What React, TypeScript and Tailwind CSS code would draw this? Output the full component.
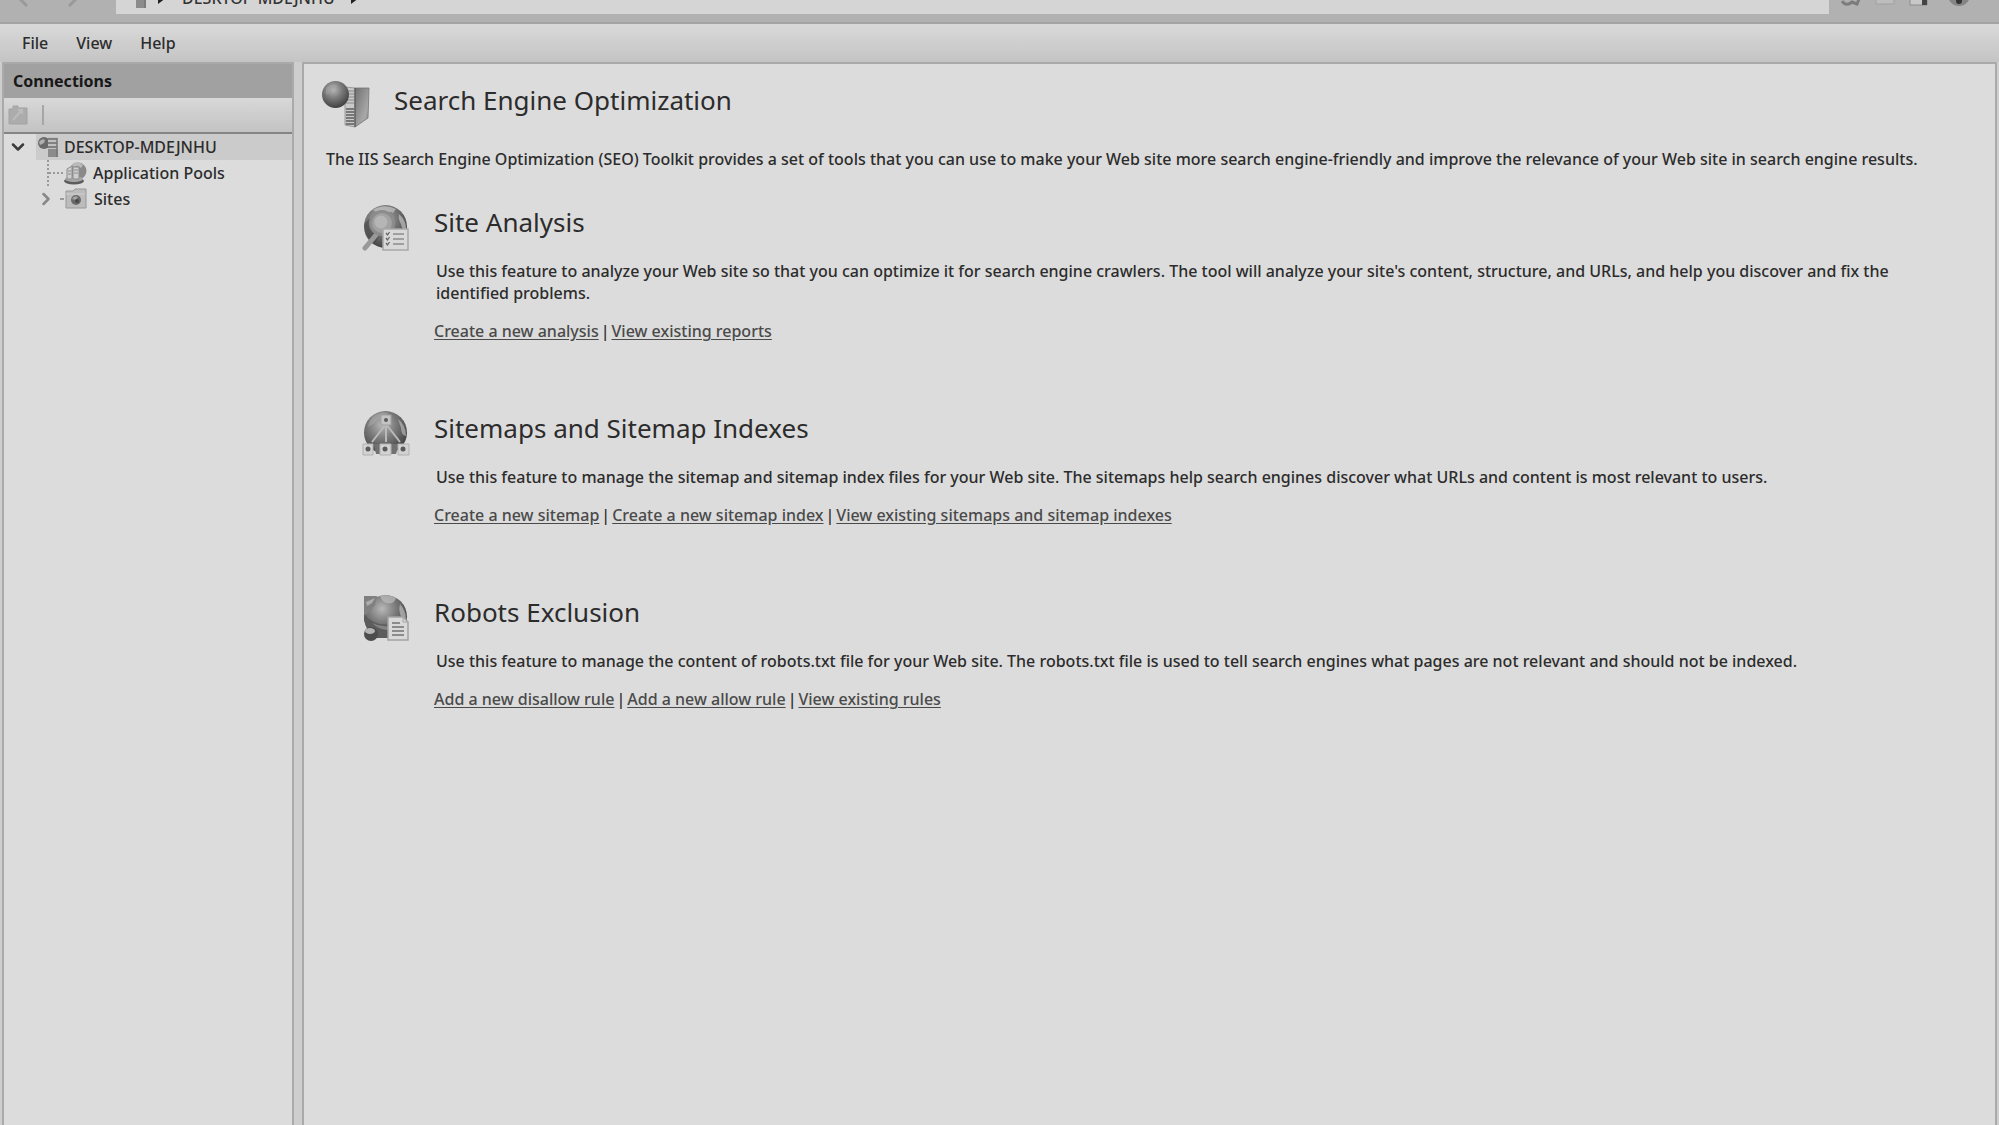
import { ChevronDown, ChevronRight } from "lucide-react";

interface SectionLink {
  label: string;
  href: string;
}

interface Section {
  title: string;
  description: string;
  links: SectionLink[];
  icon: () => React.JSX.Element;
}

function GlobeDefs({ id }: { id: string }) {
  return (
    <defs>
      <radialGradient id={id} cx="0.42" cy="0.32" r="0.7">
        <stop offset="0" stopColor="#b8b8b8" />
        <stop offset="0.45" stopColor="#7c7c7c" />
        <stop offset="1" stopColor="#3e3e3e" />
      </radialGradient>
    </defs>
  );
}

function ServerIcon({ id, className }: { id: string; className: string }) {
  return (
    <svg viewBox="0 0 48 48" className={className} aria-hidden="true">
      <GlobeDefs id={id} />
      <defs>
        <linearGradient id={`${id}-side`} x1="0" y1="0" x2="1" y2="1">
          <stop offset="0" stopColor="#707070" />
          <stop offset="0.7" stopColor="#a8a8a8" />
          <stop offset="1" stopColor="#858585" />
        </linearGradient>
      </defs>
      <path d="M23 7 L33 8 L33 47 L23 45 Z" fill="#c9c9c9" stroke="#8a8a8a" strokeWidth="0.8" />
      <path
        d="M24 11 H32 M24 14 H32 M24 17 H32 M24 20 H32 M24 23 H32"
        stroke="#8a8a8a"
        strokeWidth="1.2"
      />
      <path
        d="M24 29 H32 M24 32 H32 M24 35 H32 M24 38 H32 M24 41 H32 M24 44 H32"
        stroke="#5e5e5e"
        strokeWidth="1.6"
      />
      <path d="M33 8 L47 8 L46 38 L33 47 Z" fill={`url(#${id}-side)`} stroke="#757575" strokeWidth="0.8" />
      <path d="M33 8 V47" stroke="#555" strokeWidth="1" />
      <circle cx="13.5" cy="14.5" r="13.5" fill={`url(#${id})`} />
      <path d="M4 8 Q9 3 15 5 Q14 10 8 11 Q6 16 4 14 Z" fill="#a4a4a4" opacity="0.5" />
    </svg>
  );
}

// 24px variant used in the tree and the address bar
function SmallServerIcon() {
  return (
    <svg viewBox="0 0 24 24" className="size-6 shrink-0" aria-hidden="true">
      <circle cx="8" cy="8" r="6" fill="#6a6a6a" />
      <path d="M3 7 Q6 3 9 5 L8 8 L4 10 Z" fill="#b0b0b0" />
      <path d="M12 2 H22 V22 H12 Z" fill="#c0c0c0" />
      <path d="M12 4 H21 M12 8 H21 M12 12 H21" stroke="#6c6c6c" strokeWidth="1.5" />
      <path d="M12 14 H22 V22 H12 Z" fill="#8c8c8c" />
      <path d="M21 3 V22" stroke="#777" strokeWidth="1.5" />
    </svg>
  );
}

function AnalysisIcon() {
  return (
    <svg viewBox="0 0 48 48" className="size-12" aria-hidden="true">
      <GlobeDefs id="globe-analysis" />
      <circle cx="23.5" cy="22.5" r="21.5" fill="url(#globe-analysis)" />
      <path d="M2 20 Q3 33 13 40 L18 30 Q8 26 8 14 Z" fill="#484848" opacity="0.6" />
      <path d="M11 6 Q22 -1 34 5 L31 9 Q27 6 24 10 Q20 5 16 9 Z" fill="#c4c4c4" opacity="0.7" />
      <path d="M37 10 Q45 17 44 27 Q40 26 39 20 Q36 15 37 10 Z" fill="#c2c2c2" opacity="0.7" />
      <path d="M14 31 L3 44" stroke="#999" strokeWidth="5" strokeLinecap="round" />
      <circle cx="20" cy="19" r="11.5" fill="#a2a2a2" stroke="#8c8c8c" strokeWidth="3" />
      <circle cx="19" cy="18" r="6.5" fill="#bdbdbd" opacity="0.7" />
      <path d="M21 25 H46 V46 H21 Z" fill="#d9d9d9" stroke="#a8a8a8" strokeWidth="1.5" />
      <path d="M31 30 H42 M31 35 H42 M31 40 H42" stroke="#8c8c8c" strokeWidth="1.6" />
      <path d="M24 29 l1.5 2 l2 -3 M24 34 l1.5 2 l2 -3 M24 39 l1.5 2 l2 -3" stroke="#666" strokeWidth="1.3" fill="none" />
    </svg>
  );
}

function SitemapIcon() {
  return (
    <svg viewBox="0 0 48 48" className="size-12" aria-hidden="true">
      <GlobeDefs id="globe-sitemap" />
      <circle cx="23.5" cy="22.5" r="21.5" fill="url(#globe-sitemap)" />
      <path d="M13 5 Q20 1 26 3 Q22 9 16 9 Q12 14 6 17 Q7 9 13 5 Z" fill="#adadad" opacity="0.5" />
      <path d="M36 9 Q44 15 44 26 Q39 25 39 18 Z" fill="#b5b5b5" opacity="0.7" />
      <path d="M12 34 H37 L34 44 H14 Z" fill="#707070" />
      <path d="M24 14 L10 32 M24 14 V32 M24 14 L38 32" stroke="#bababa" strokeWidth="2" fill="none" />
      <path d="M19 5 H29 V15 H19 Z" fill="#c4c4c4" stroke="#a0a0a0" />
      <path d="M1 34 H11 V45 H1 Z M18 34 H29 V45 H18 Z M36 34 H47 V45 H36 Z" fill="#d2d2d2" stroke="#b0b0b0" />
      <g fill="#5a5a5a">
        <circle cx="24" cy="10" r="2" />
        <circle cx="6" cy="39" r="2.5" />
        <circle cx="23" cy="39" r="2.5" />
        <circle cx="41" cy="39" r="2.5" />
      </g>
    </svg>
  );
}

function RobotsIcon() {
  return (
    <svg viewBox="0 0 48 48" className="size-12" aria-hidden="true">
      <GlobeDefs id="globe-robots" />
      <circle cx="23.5" cy="22.5" r="21.5" fill="url(#globe-robots)" />
      <path d="M18 2 Q27 0 34 4 Q32 11 25 9 Q20 8 18 2 Z" fill="#bebebe" opacity="0.7" />
      <path d="M38 10 Q44 17 44 25 H40 Q36 17 38 10 Z" fill="#bcbcbc" opacity="0.7" />
      <path d="M2 2 H15 L13 11 L7 18 L2 22 Z" fill="#808080" />
      <path d="M4 8 L13 4 L10 9 L5 12 Z" fill="#adadad" />
      <path d="M2 20 Q13 33 29 30 L27 44 H12 Q4 36 2 26 Z" fill="#5c5c5c" />
      <path d="M10 29 Q18 33 27 32 L26 36 Q17 36 10 29 Z" fill="#959595" opacity="0.7" />
      <circle cx="9" cy="40" r="7" fill="#4d4d4d" />
      <ellipse cx="8" cy="37" rx="5" ry="3" fill="#b5b5b5" />
      <path d="M26 23 H41 L46 28 V46 H26 Z" fill="#d9d9d9" stroke="#a2a2a2" strokeWidth="1.5" />
      <path d="M41 23 V28 H46" fill="none" stroke="#a5a5a5" />
      <path d="M30 29 H38 M30 33 H42 M30 37 H42 M30 41 H42" stroke="#727272" strokeWidth="1.6" />
    </svg>
  );
}

function PoolsIcon() {
  return (
    <svg viewBox="0 0 24 24" className="size-6 shrink-0" aria-hidden="true">
      <circle cx="15" cy="10" r="8.5" fill="#8a8a8a" />
      <path d="M9 3 Q15 -1 20 4 L18 7 Q14 3 10 7 Z" fill="#bababa" />
      <ellipse cx="11" cy="20" rx="10" ry="3.5" fill="#5c5c5c" />
      <ellipse cx="11" cy="18" rx="9" ry="3" fill="#a8a8a8" />
      <path d="M4 8 L9 5 V18 H4 Z M10 6 H16 V18 H10 Z" fill="#cecece" stroke="#8c8c8c" />
      <path d="M5 10 H8 M5 13 H8 M11 9 H15 M11 12 H15" stroke="#8c8c8c" />
    </svg>
  );
}

function SitesIcon() {
  return (
    <svg viewBox="0 0 24 24" className="size-6 shrink-0" aria-hidden="true">
      <path d="M2 4 H9 L11 2 H22 V21 H2 Z" fill="#bcbcbc" stroke="#989898" />
      <path d="M2 7 H21" stroke="#d0d0d0" />
      <circle cx="12" cy="13" r="5" fill="#6a6a6a" />
      <path d="M8 12 Q10 8 14 10 L12 13 Z" fill="#a5a5a5" />
      <circle cx="13" cy="14" r="2" fill="#484848" />
    </svg>
  );
}

const sections: Section[] = [
  {
    title: "Site Analysis",
    description:
      "Use this feature to analyze your Web site so that you can optimize it for search engine crawlers. The tool will analyze your site's content, structure, and URLs, and help you discover and fix the identified problems.",
    links: [
      { label: "Create a new analysis", href: "#new-analysis" },
      { label: "View existing reports", href: "#reports" },
    ],
    icon: AnalysisIcon,
  },
  {
    title: "Sitemaps and Sitemap Indexes",
    description:
      "Use this feature to manage the sitemap and sitemap index files for your Web site. The sitemaps help search engines discover what URLs and content is most relevant to users.",
    links: [
      { label: "Create a new sitemap", href: "#new-sitemap" },
      { label: "Create a new sitemap index", href: "#new-sitemap-index" },
      { label: "View existing sitemaps and sitemap indexes", href: "#sitemaps" },
    ],
    icon: SitemapIcon,
  },
  {
    title: "Robots Exclusion",
    description:
      "Use this feature to manage the content of robots.txt file for your Web site. The robots.txt file is used to tell search engines what pages are not relevant and should not be indexed.",
    links: [
      { label: "Add a new disallow rule", href: "#disallow" },
      { label: "Add a new allow rule", href: "#allow" },
      { label: "View existing rules", href: "#rules" },
    ],
    icon: RobotsIcon,
  },
];

function AddressBar() {
  return (
    <header className="flex h-6 items-end overflow-hidden border-b-2 border-[#a3a3a3] bg-[#b1b1b1] pb-2">
      <nav className="flex w-[116px] shrink-0 items-end pl-3 text-[#999]">
        <button aria-label="Back" className="flex h-8 w-9 items-center justify-center">
          <svg viewBox="0 0 32 32" className="size-8" fill="none" stroke="currentColor" strokeWidth="3">
            <path d="M13 6 L4 15 L13 24 M5 15 H29" />
          </svg>
        </button>
        <button aria-label="Forward" className="flex h-8 w-9 items-center justify-center">
          <svg viewBox="0 0 32 32" className="size-8" fill="none" stroke="currentColor" strokeWidth="3">
            <path d="M19 6 L28 15 L19 24 M27 15 H3" />
          </svg>
        </button>
      </nav>
      <div className="flex h-8 flex-1 items-center bg-[#d5d5d5] pl-2 text-[16px] text-[#333]">
        <SmallServerIcon />
        <svg viewBox="0 0 8 12" className="ml-2.5 h-3 w-2" fill="#222" aria-hidden="true">
          <path d="M0 0 L8 6 L0 12 Z" />
        </svg>
        <span className="mx-4">DESKTOP-MDEJNHU</span>
        <svg viewBox="0 0 8 12" className="h-3 w-2" fill="#222" aria-hidden="true">
          <path d="M0 0 L8 6 L0 12 Z" />
        </svg>
      </div>
      <div className="flex w-[170px] shrink-0 items-end gap-3.5 pl-3">
        <button aria-label="Refresh" className="h-6 w-5">
          <svg viewBox="0 0 20 24" className="h-6 w-5">
            <path d="M1 11 Q5 17 11 12 L16 14 L18 9" fill="none" stroke="#7c7c7c" strokeWidth="3" />
          </svg>
        </button>
        <button aria-label="Stop" className="h-6 w-5">
          <svg viewBox="0 0 20 24" className="h-6 w-5">
            <path d="M1 0 H19 V14 H1 Z" fill="#bdbdbd" stroke="#a0a0a0" />
          </svg>
        </button>
        <button aria-label="Home" className="h-6 w-5">
          <svg viewBox="0 0 20 24" className="h-6 w-5">
            <path d="M1 0 H18 V15 H1 Z" fill="#c8c8c8" stroke="#8c8c8c" />
            <path d="M13 4 H18 V15 H13 Z" fill="#444" />
          </svg>
        </button>
        <button aria-label="Help" className="ml-1 h-6 w-6">
          <svg viewBox="0 0 24 24" className="size-6">
            <circle cx="12" cy="5" r="11" fill="#858585" />
            <circle cx="12" cy="11" r="3" fill="#333" />
          </svg>
        </button>
      </div>
    </header>
  );
}

function ConnectionsPanel() {
  return (
    <aside className="flex w-[292px] shrink-0 flex-col border-2 border-b-0 border-[#aaa] bg-[#dcdcdc]">
      <h2 className="bg-[#a1a1a1] pl-[9px] text-[16px] leading-[34px] font-bold text-[#181818]">Connections</h2>
      <div className="flex h-9 items-center gap-3.5 border-b-2 border-[#858585] bg-linear-to-b from-[#d8d8d8] to-[#c3c3c3] pl-1">
        <button aria-label="Create new connection" className="size-5">
          <svg viewBox="0 0 20 20" className="size-5">
            <path d="M1 4 H5 V1 H10 V3 H19 V19 H1 Z" fill="#acacac" stroke="#a3a3a3" />
            <path d="M5 15 L13 6 M10 5 L14 5 V9" stroke="#bcbcbc" strokeWidth="2" fill="none" />
          </svg>
        </button>
        <span className="h-5 w-[2px] bg-[#a6a6a6]" />
      </div>
      <ul className="text-[16px] leading-[26px]">
        <li>
          <div className="flex items-center pl-1">
            <button aria-label="Collapse DESKTOP-MDEJNHU" className="mr-2 flex size-5 items-center justify-center">
              <ChevronDown className="size-5 text-[#3a3a3a]" strokeWidth={3} />
            </button>
            <div className="flex flex-1 items-center gap-1 bg-[#cbcbcb]">
              <SmallServerIcon />
              <span>DESKTOP-MDEJNHU</span>
            </div>
          </div>
          <ul>
            <li className="flex items-center pl-[43px]">
              <span className="h-[26px] w-0 border-l-2 border-dotted border-[#999]" />
              <span className="w-3.5 border-t-2 border-dotted border-[#999]" />
              <PoolsIcon />
              <span className="ml-1.5">Application Pools</span>
            </li>
            <li className="flex items-center pl-8">
              <button aria-label="Expand Sites" className="flex size-5 items-center justify-center">
                <ChevronRight className="size-5 text-[#888]" strokeWidth={3} />
              </button>
              <span className="ml-1 w-1 border-t-2 border-dotted border-[#999]" />
              <SitesIcon />
              <span className="ml-1.5">Sites</span>
            </li>
          </ul>
        </li>
      </ul>
    </aside>
  );
}

function FeatureSection({ section }: { section: Section }) {
  const Icon = section.icon;

  return (
    <section className="flex gap-6">
      <div className="shrink-0 pt-[2px]">
        <Icon />
      </div>
      <div>
        <h2 className="text-[26px] leading-10 font-normal">{section.title}</h2>
        <p className="mt-[18px] pl-[2px]">{section.description}</p>
        <div className="mt-4 flex gap-0.5">
          {section.links.map((link, index) => (
            <div key={link.href} className="flex gap-0.5">
              {index > 0 && <span>|</span>}
              <a href={link.href} className="text-[#4a4a4a] underline underline-offset-2">
                {link.label}
              </a>
            </div>
          ))}
        </div>
      </div>
    </section>
  );
}

export default function App() {
  return (
    <div className="flex min-h-screen flex-col bg-[#cecece] font-['Noto_Sans',sans-serif] font-medium text-[#2c2c2c]">
      <AddressBar />
      <nav className="flex h-[38px] items-center gap-7 bg-linear-to-b from-[#d9d9d9] to-[#c4c4c4] pl-[22px] text-[16px]">
        <button>File</button>
        <button>View</button>
        <button>Help</button>
      </nav>
      <div className="flex flex-1 gap-2 px-[2px]">
        <ConnectionsPanel />
        <main className="flex-1 border-2 border-b-0 border-[#aaa] bg-[#dcdcdc] pt-4 pr-[60px] pl-[18px] text-[16px] leading-[22px]">
          <div className="flex gap-6">
            <ServerIcon id="title-server" className="size-12" />
            <h1 className="text-[26px] leading-10 font-normal">Search Engine Optimization</h1>
          </div>
          <p className="mt-5 pl-1">
            The IIS Search Engine Optimization (SEO) Toolkit provides a set of tools that you can use to make your Web site more
            search engine-friendly and improve the relevance of your Web site in search engine results.
          </p>
          <div className="mt-8 flex flex-col gap-[66px] pl-10">
            {sections.map((section) => (
              <FeatureSection key={section.title} section={section} />
            ))}
          </div>
        </main>
      </div>
    </div>
  );
}
